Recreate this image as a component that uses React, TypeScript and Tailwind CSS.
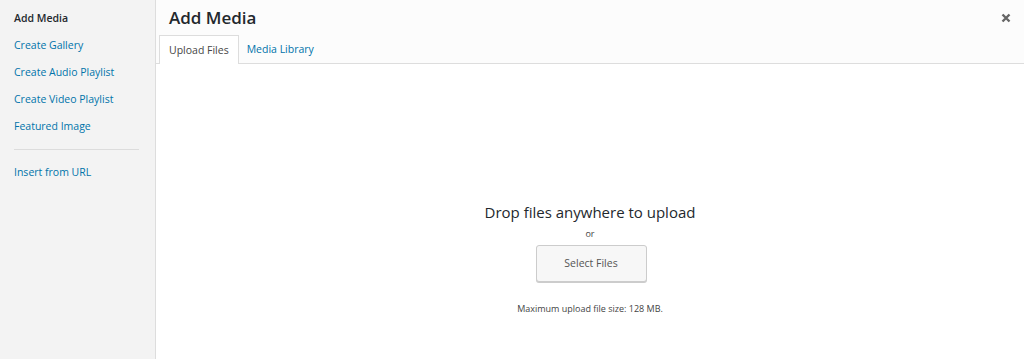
export default function App() {
  const links = ['Create Gallery', 'Create Audio Playlist', 'Create Video Playlist', 'Featured Image']

  return (
    <div className="flex h-[359px] w-[1024px] overflow-hidden bg-white font-['Open_Sans',sans-serif]">
      {/* Sidebar menu */}
      <aside className="w-[156px] shrink-0 border-r border-[#dddddd] bg-[#f3f3f3] pt-[5px]">
        <div className="px-[14px] text-[10.5px] leading-[27px] font-semibold text-[#23282d]">Add Media</div>
        {links.map((label) => (
          <div key={label} className="px-[14px] text-[10.5px] leading-[27px] text-[#0073aa]">
            {label}
          </div>
        ))}
        <div className="mx-[14px] mt-[9px] h-px w-[125px] bg-[#dcdcdc]" />
        <div className="mt-[9px] px-[14px] text-[10.5px] leading-[27px] text-[#0073aa]">Insert from URL</div>
      </aside>

      {/* Main frame */}
      <main className="flex min-w-0 flex-1 flex-col">
        <header className="relative h-[64px] border-b border-[#dddddd] bg-[#fcfcfc]">
          <h1 className="pl-[13px] pt-[6px] text-[17px] leading-[24px] font-semibold text-[#23282d]">Add Media</h1>
          <button className="absolute right-[13px] top-[13px] flex h-[10px] w-[10px] items-center justify-center text-[#666666]">
            <svg width="10" height="10" viewBox="0 0 10 10">
              <path d="M1.5 1.5 L8.5 8.5 M8.5 1.5 L1.5 8.5" stroke="currentColor" strokeWidth="2.4" />
            </svg>
          </button>
          <nav className="absolute bottom-[-1px] left-[3px] flex">
            <div className="h-[29px] border border-b-0 border-[#dddddd] bg-white px-[9px] text-[10.5px] leading-[28px] text-[#464646]">
              Upload Files
            </div>
            <div className="h-[28px] px-[8px] text-[10.5px] leading-[28px] text-[#0073aa]">Media Library</div>
          </nav>
        </header>

        {/* Upload area */}
        <section className="flex flex-1 flex-col items-center pt-[137px]">
          <p className="text-[15px] leading-[22px] text-[#23282d]">Drop files anywhere to upload</p>
          <p className="mt-[4px] text-[9px] leading-[14px] text-[#444444]">or</p>
          <button className="ml-[2px] mt-[4px] h-[37px] w-[111px] rounded-[3px] border border-[#cccccc] bg-[#f7f7f7] text-[10.5px] text-[#555555] shadow-[0_1px_0_#cccccc]">
            Select Files
          </button>
          <p className="mt-[20px] text-[9px] leading-[14px] text-[#444444]">Maximum upload file size: 128 MB.</p>
        </section>
      </main>
    </div>
  )
}
